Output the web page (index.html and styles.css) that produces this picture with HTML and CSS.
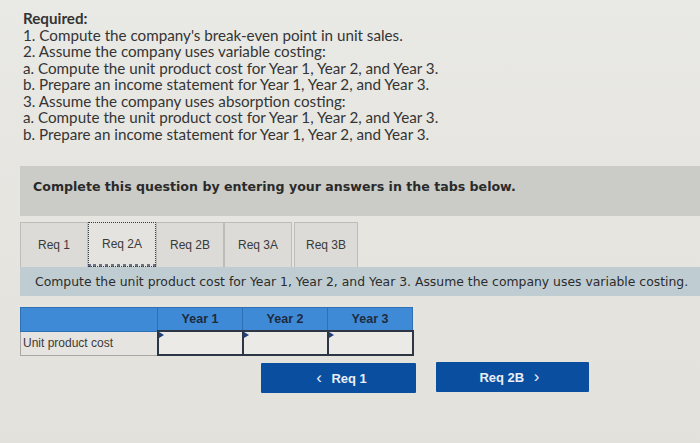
FILE: index.html
```html
<!DOCTYPE html>
<html lang="en">
<head>
  <meta charset="UTF-8" />
  <title>Req 2A</title>
  <link rel="stylesheet" href="styles.css">
</head>
<body>
  <div class="required">
    <strong>Required:</strong>
    <p>1. Compute the company's break-even point in unit sales.</p>
    <p>2. Assume the company uses variable costing:</p>
    <p>a. Compute the unit product cost for Year 1, Year 2, and Year 3.</p>
    <p>b. Prepare an income statement for Year 1, Year 2, and Year 3.</p>
    <p>3. Assume the company uses absorption costing:</p>
    <p>a. Compute the unit product cost for Year 1, Year 2, and Year 3.</p>
    <p>b. Prepare an income statement for Year 1, Year 2, and Year 3.</p>
  </div>

  <div class="question">
    <div class="instructions">Complete this question by entering your answers in the tabs below.</div>

    <div class="tabs">
      <button class="tab">Req 1</button>
      <button class="tab active">Req 2A</button>
      <button class="tab">Req 2B</button>
      <button class="tab">Req 3A</button>
      <button class="tab">Req 3B</button>
    </div>

    <div class="prompt">Compute the unit product cost for Year 1, Year 2, and Year 3. Assume the company uses variable costing.</div>

    <table class="answers">
      <thead>
        <tr>
          <th class="label-col"></th>
          <th>Year 1</th>
          <th>Year 2</th>
          <th>Year 3</th>
        </tr>
      </thead>
      <tbody>
        <tr>
          <td class="label-col">Unit product cost</td>
          <td class="cell"><input type="text" /></td>
          <td class="cell"><input type="text" /></td>
          <td class="cell"><input type="text" /></td>
        </tr>
      </tbody>
    </table>

    <div class="nav">
      <button class="nav-btn prev"><span class="chev">&lsaquo;</span> Req 1</button>
      <button class="nav-btn next">Req 2B <span class="chev">&rsaquo;</span></button>
    </div>
  </div>
</body>
</html>
```

FILE: styles.css
```css
html, body { margin: 0; padding: 0; }
body {
  background: linear-gradient(#e9e9e5, #e3e1db);
  color: #333;
  font-family: Lato, "Liberation Sans", sans-serif;
  height: 443px;
  overflow: hidden;
}

.required {
  padding: 10px 0 0 23px;
  font-size: 15.2px;
  line-height: 16.5px;
  color: #343434;
}
.required strong { display: block; font-weight: 700; }
.required p { margin: 0; }

.question { padding-left: 20px; }

.instructions {
  margin-top: 24px;
  height: 50px;
  box-sizing: border-box;
  padding: 13px 0 0 13px;
  background: #cbcbc7;
  font-family: "DejaVu Sans", Verdana, sans-serif;
  font-size: 12.6px;
  font-weight: 700;
  color: #2a2a2a;
}

.tabs {
  display: flex;
  margin-top: 6px;
  height: 45px;
}
.tab {
  width: 68px;
  height: 45px;
  border: 1px solid #bdbcb8;
  border-bottom: none;
  background: #dcdbd7;
  color: #3a3a3a;
  font-family: "Liberation Sans", Arial, sans-serif;
  font-size: 12px;
  padding: 0;
  cursor: pointer;
}
.tab:last-child { margin-left: 2px; width: 64px; }
.tab.active {
  background: #e4e3df;
  outline: 1px dotted #333a55;
  outline-offset: -1px;
  border-color: #6e7384;
  border-style: dotted;
}

.prompt {
  height: 29px;
  box-sizing: border-box;
  padding: 7px 0 0 15px;
  background: #bfcdd2;
  font-family: "DejaVu Sans", Verdana, sans-serif;
  font-size: 12.4px;
  color: #2c2c2c;
  white-space: nowrap;
}

.answers {
  margin-top: 11px;
  border-collapse: collapse;
  font-family: "Liberation Sans", Arial, sans-serif;
}
.answers th {
  height: 22px;
  padding: 0;
  width: 84px;
  background: #3f8ad6;
  border: 1px solid #2f6fb4;
  color: #1d2b3d;
  font-size: 12.5px;
  font-weight: 700;
}
.answers th.label-col { width: 136px; }
.answers td {
  height: 22px;
  padding: 0;
  font-size: 12px;
}
.answers td.label-col {
  background: #e6e4e0;
  border: 1px solid #a9a8a4;
  color: #3a3a3a;
  padding-left: 2px;
}
.answers td.cell {
  position: relative;
  border: 2px solid #2c3644;
  background: #eceae6;
}
.answers td.cell::before {
  content: "";
  position: absolute;
  left: 0;
  top: 0;
  border-left: 5px solid #1f3f7a;
  border-top: 3px solid transparent;
  border-bottom: 3px solid transparent;
}
.answers input {
  display: block;
  width: 100%;
  height: 20px;
  box-sizing: border-box;
  border: none;
  background: transparent;
}

.nav {
  display: flex;
  gap: 20px;
  margin-top: 6px;
  padding-left: 241px;
  align-items: flex-start;
}
.nav-btn {
  height: 30px;
  border: none;
  border-radius: 1px;
  background: #0a4f9f;
  color: #e9eef6;
  font-family: "Liberation Sans", Arial, sans-serif;
  font-size: 13px;
  font-weight: 700;
  cursor: pointer;
}
.nav-btn.prev { width: 155px; margin-top: 1px; }
.nav-btn.next { width: 153px; }
.chev { font-size: 17px; font-weight: 400; margin: 0 6px; }
```
